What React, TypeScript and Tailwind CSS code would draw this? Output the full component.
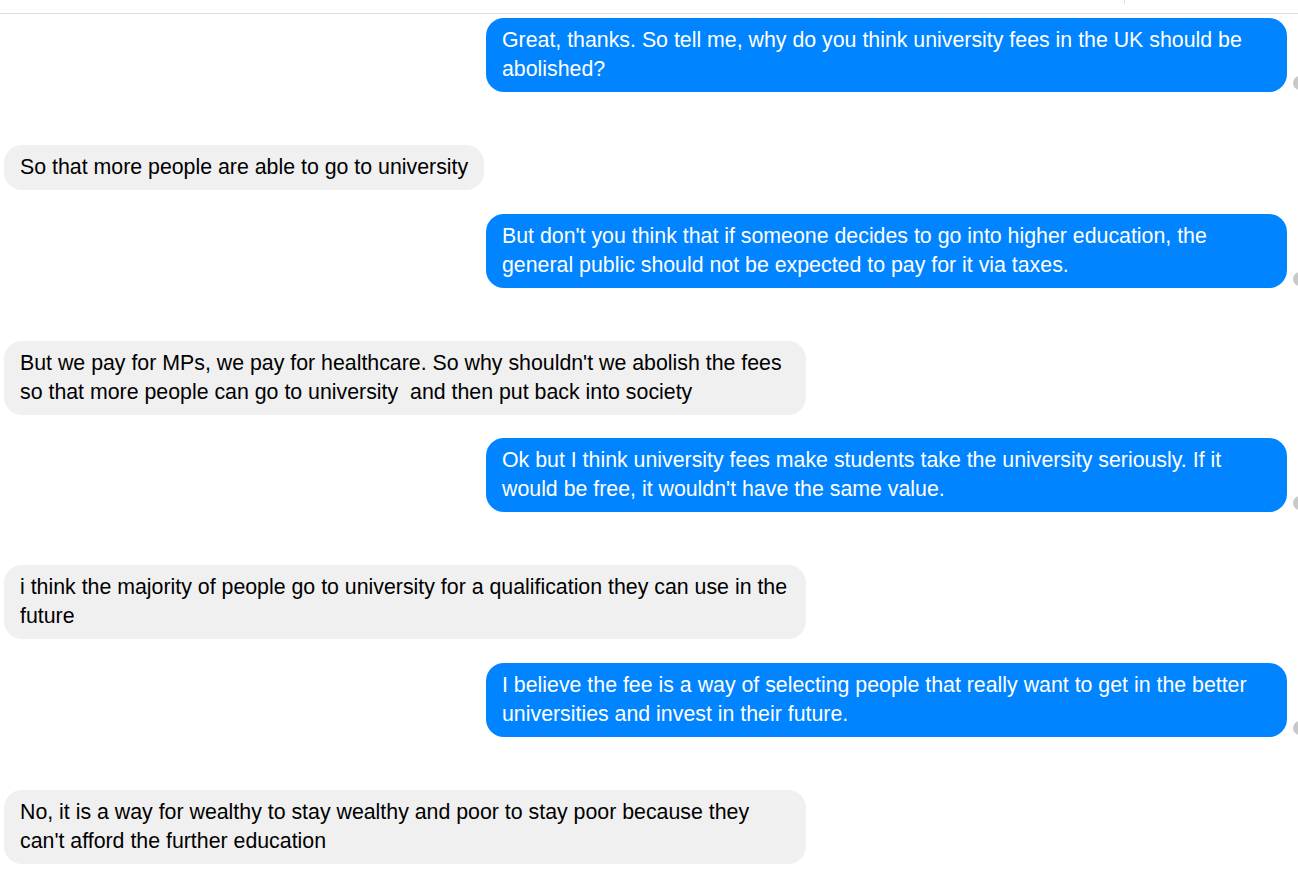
type Msg = { from: "me" | "them"; text: string };

const messages: Msg[] = [
  {
    from: "me",
    text: "Great, thanks. So tell me, why do you think university fees in the UK should be abolished?",
  },
  { from: "them", text: "So that more people are able to go to university" },
  {
    from: "me",
    text: "But don't you think that if someone decides to go into higher education, the general public should not be expected to pay for it via taxes.",
  },
  {
    from: "them",
    text: "But we pay for MPs, we pay for healthcare. So why shouldn't we abolish the fees so that more people can go to university\u00a0 and then put back into society",
  },
  {
    from: "me",
    text: "Ok but I think university fees make students take the university seriously. If it would be free, it wouldn't have the same value.",
  },
  {
    from: "them",
    text: "i think the majority of people go to university for a qualification they can use in the future",
  },
  {
    from: "me",
    text: "I believe the fee is a way of selecting people that really want to get in the better universities and invest in their future.",
  },
  {
    from: "them",
    text: "No, it is a way for wealthy to stay wealthy and poor to stay poor because they can't afford the further education",
  },
];

function Bubble({ msg }: { msg: Msg }) {
  if (msg.from === "me") {
    return (
      <div className="mb-[53px] flex justify-end pr-[11px]">
        <div className="relative max-w-[801px] rounded-[18px] bg-[#0084ff] px-4 py-2 text-[21.33px] leading-[29px] text-white">
          {msg.text}
          <span className="absolute -right-[20px] bottom-[2px] h-[14px] w-[14px] rounded-full bg-[#c8c8c8]" />
        </div>
      </div>
    );
  }
  return (
    <div className="mb-[23.5px] flex justify-start pl-1">
      <div className="max-w-[802px] rounded-[18px] bg-[#f0f0f0] px-4 py-2 text-[21.33px] leading-[29px] text-black">
        {msg.text}
      </div>
    </div>
  );
}

export default function App() {
  return (
    <div className="h-[875px] w-[1298px] overflow-hidden bg-white font-['Liberation_Sans',Arial,sans-serif]">
      <div className="relative h-[14px] border-b border-[#dddddd]">
        <span className="absolute left-[1124px] top-0 h-[4px] w-px bg-[#e2e2e2]" />
      </div>
      <div className="flex flex-col pt-1">
        {messages.map((m, i) => (
          <Bubble key={i} msg={m} />
        ))}
      </div>
    </div>
  );
}
